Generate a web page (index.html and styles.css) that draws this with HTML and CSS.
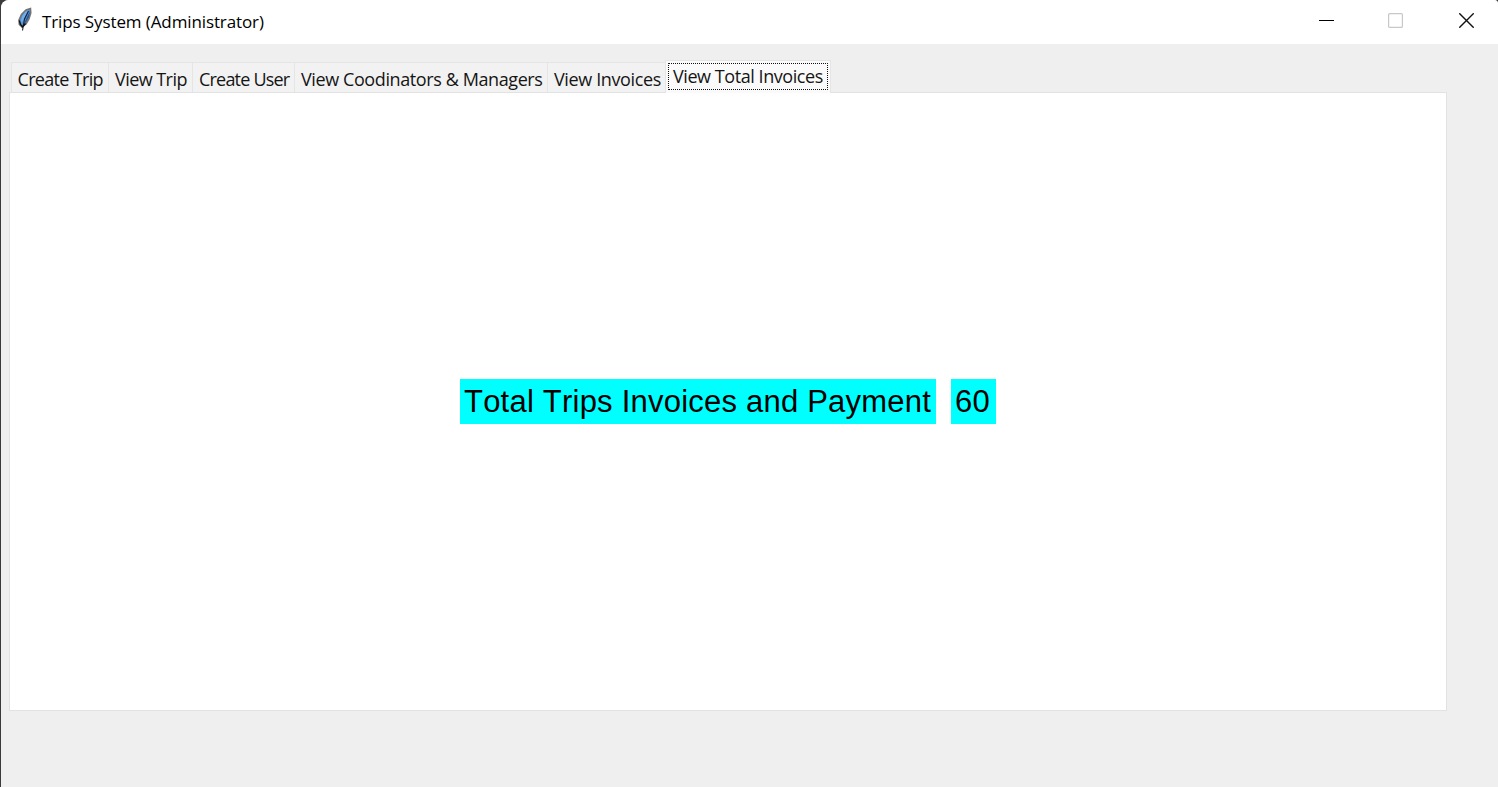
FILE: index.html
```html
<!DOCTYPE html>
<html lang="en">
<head>
<meta charset="utf-8">
<title>Trips System (Administrator)</title>
<link rel="stylesheet" href="styles.css">
</head>
<body>
<div class="desktop">
  <div class="window">
    <header class="titlebar">
      <svg class="feather" width="16" height="26" viewBox="0 0 16 26">
        <path d="M13.500 1.500L9 3 4.500 7.500 2 13 2.300 17.500 5 20 9 17 12 12 13.800 6Z" fill="#4f8fd6" stroke="#77736f" stroke-width="1.500"/>
        <path d="M11.500 3L8 5 4.800 10 4 14 5 16 9 8Z" fill="#73acec"/>
        <path d="M13 4L12 10 9 15 6.500 18 9.500 11Z" fill="#285a91"/>
        <path d="M11.500 4L7.500 12 5.500 23.500" fill="none" stroke="#1b222b" stroke-width="1.100"/>
        <path d="M2.300 13.500L3.500 17.500 5.500 20 8.500 16.500" fill="none" stroke="#111" stroke-width="1.400"/>
      </svg>
      <span class="title">Trips System (Administrator)</span>
      <div class="controls">
        <svg width="15" height="15" viewBox="0 0 15 15"><path d="M0 7.500H15" stroke="#000"/></svg>
        <svg width="15" height="15" viewBox="0 0 15 15"><rect x=".6" y=".6" width="13.800" height="13.800" rx="1" fill="none" stroke="#c8c8c8" stroke-width="1.200"/></svg>
        <svg width="15" height="15" viewBox="0 0 15 15"><path d="M.3.3L14.700 14.700M14.700.3L.3 14.700" stroke="#111" stroke-width="1.400"/></svg>
      </div>
    </header>
    <main class="content">
      <nav class="tabs">
        <div class="tab create-trip"><span>Create Trip</span></div>
        <div class="tab view-trip"><span>View Trip</span></div>
        <div class="tab create-user"><span>Create User</span></div>
        <div class="tab staff"><span>View Coodinators &amp; Managers</span></div>
        <div class="tab invoices"><span>View Invoices</span></div>
        <div class="tab selected"><span>View Total Invoices</span></div>
      </nav>
      <section class="pane">
        <div class="label total">Total Trips Invoices and Payment</div>
        <div class="label amount">60</div>
      </section>
    </main>
  </div>
</div>
</body>
</html>
```
FILE: styles.css
```css
* { box-sizing: border-box; }
body { margin: 0; font-family: "Open Sans", "Noto Sans", sans-serif; color: #000; }
.desktop { width: 1498px; height: 787px; padding-left: 1px; background: #3d3a3c; overflow: hidden; }
.window { height: 787px; background: #efefef; border-radius: 8px 4px 0 0; overflow: hidden; }
.titlebar { height: 44px; background: #fff; display: flex; align-items: flex-start; padding: 7px 24px 0 16px; }
.feather { flex: none; }
.title { font-size: 17px; line-height: 24px; margin: 3px 0 0 9px; letter-spacing: -0.11px; white-space: nowrap; }
.controls { margin: 6px 0 0 auto; display: flex; }
.controls svg + svg { margin-left: 54px; }
.controls svg:last-child { margin-left: 56px; }
.content { padding: 16px 0 0 8px; }
.tabs { display: flex; align-items: flex-start; height: 32px; padding-left: 2px; }
.tab { height: 30px; margin-top: 2px; border: 1px solid #e5e5e5; border-width: 1px 0 0 1px; background: #f2f2f2; font-size: 18px; line-height: 33px; color: #151515; padding-left: 6px; white-space: nowrap; letter-spacing: -0.5px; }
.create-trip { width: 97px; padding-left: 5.5px; letter-spacing: -0.68px; }
.view-trip { width: 84px; letter-spacing: -0.55px; }
.create-user { width: 102px; letter-spacing: -0.8px; }
.staff { width: 253px; letter-spacing: -0.4px; }
.invoices { width: 118px; letter-spacing: -0.37px; }
.selected { width: 166px; height: 33px; margin-top: 0; background: #fafafa; border-right-width: 1px; padding: 2px 2px 0; position: relative; letter-spacing: -0.44px; }
.selected span { display: block; width: 160px; height: 27px; line-height: 25px; border: 1px dotted #111; border-radius: 1px; padding-left: 4px; }
.pane { width: 1438px; height: 619px; background: #fff; border: 1px solid #e2e2e2; display: flex; justify-content: center; align-items: center; gap: 15px; padding-bottom: 1px; }
.label { height: 45px; background: #00ffff; font: 31px/45px "Liberation Sans", Arial, sans-serif; font-kerning: none; padding-left: 4px; white-space: nowrap; }
.total { width: 476px; letter-spacing: 0.22px; }
.amount { width: 45px; letter-spacing: 0.3px; }
```
